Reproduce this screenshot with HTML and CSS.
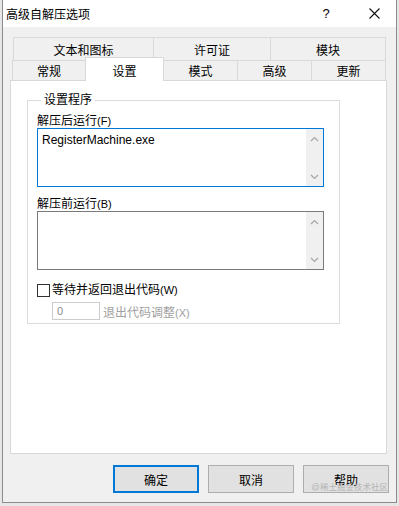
FILE: index.html
```html
<!DOCTYPE html>
<html lang="zh-CN">

<head>
    <meta charset="UTF-8">
    <meta name="viewport" content="width=device-width, initial-scale=1.0">
    <title>高级自解压选项</title>
    <link rel="stylesheet" href="styles.css">
</head>

<body>
    <div class="window">
        <div class="titlebar">
            <span class="title">高级自解压选项</span>
            <span class="help">?</span>
            <span class="close">
                <svg width="11" height="11" viewBox="0 0 11 11">
                    <path d="M0.5 0.5 L10.5 10.5 M10.5 0.5 L0.5 10.5" stroke="#111" stroke-width="1.1" fill="none" />
                </svg>
            </span>
        </div>

        <div class="client">
            <div class="tabs">
                <div class="tabrow back">
                    <div class="tab w1">文本和图标</div>
                    <div class="tab w2">许可证</div>
                    <div class="tab w3">模块</div>
                </div>
                <div class="tabrow front">
                    <div class="tab t1">常规</div>
                    <div class="tab t2 active">设置</div>
                    <div class="tab t3">模式</div>
                    <div class="tab t4">高级</div>
                    <div class="tab t5">更新</div>
                </div>
            </div>

            <div class="panel">
                <fieldset class="group">
                    <legend>设置程序</legend>

                    <div class="label">解压后运行<span class="en">(F)</span></div>
                    <div class="memo focused">
                        <div class="memo-text">RegisterMachine.exe</div>
                        <div class="scroll">
                            <svg width="9" height="6" viewBox="0 0 9 6"><path d="M1 5 L4.5 1.5 L8 5" stroke="#a6a6a6" stroke-width="1.2" fill="none" /></svg>
                            <svg width="9" height="6" viewBox="0 0 9 6"><path d="M1 1 L4.5 4.5 L8 1" stroke="#a6a6a6" stroke-width="1.2" fill="none" /></svg>
                        </div>
                    </div>

                    <div class="label second">解压前运行<span class="en">(B)</span></div>
                    <div class="memo">
                        <div class="memo-text"></div>
                        <div class="scroll">
                            <svg width="9" height="6" viewBox="0 0 9 6"><path d="M1 5 L4.5 1.5 L8 5" stroke="#a6a6a6" stroke-width="1.2" fill="none" /></svg>
                            <svg width="9" height="6" viewBox="0 0 9 6"><path d="M1 1 L4.5 4.5 L8 1" stroke="#a6a6a6" stroke-width="1.2" fill="none" /></svg>
                        </div>
                    </div>

                    <div class="check">
                        <span class="box"></span>
                        <span>等待并返回退出代码<span class="en">(W)</span></span>
                    </div>
                    <div class="exitcode">
                        <div class="numbox">0</div>
                        <span>退出代码调整<span class="en">(X)</span></span>
                    </div>
                </fieldset>
            </div>

            <div class="buttons">
                <button type="button" class="btn default">确定</button>
                <button type="button" class="btn">取消</button>
                <button type="button" class="btn">帮助</button>
            </div>
            <div class="mark">@稀土掘金技术社区</div>
        </div>
    </div>
</body>

</html>
```

FILE: styles.css
```css
* {
    margin: 0;
    padding: 0;
    box-sizing: border-box;
    font-family: "Liberation Sans", "Noto Sans CJK SC", sans-serif;
}

body {
    background: #e6e6e6;
    width: 399px;
    height: 506px;
    overflow: hidden;
}

.window {
    width: 395px;
    height: 503px;
    margin-left: 2px;
    border: 1px solid #8c8c8c;
    border-top: none;
    background: #f0f0f0;
    display: flex;
    flex-direction: column;
}

.titlebar {
    height: 27px;
    background: #fff;
    display: flex;
    align-items: center;
    font-size: 12px;
    color: #000;
    padding-left: 3px;
}

.title {
    flex: 1;
}

.help {
    width: 8px;
    text-align: center;
    font-size: 13px;
    margin-right: 39px;
}

.close {
    display: flex;
    margin-right: 16px;
}

.client {
    position: relative;
    flex: 1;
    padding: 10px 0 0 7px;
}

.tabs {
    font-size: 12px;
    color: #000;
}

.tabrow {
    display: flex;
    margin-left: 3px;
}

.tabrow.front {
    margin-left: 2px;
}

.tab {
    display: flex;
    align-items: center;
    justify-content: center;
    background: #f0f0f0;
    border: 1px solid #d9d9d9;
    border-bottom: none;
    margin-right: -1px;
}

.back .tab {
    height: 23px;
}

.front .tab {
    height: 20px;
}

.w1 { width: 141px; }
.w2 { width: 118px; }
.w3 { width: 116px; }
.t1 { width: 74px; }
.t2 { width: 79px; }
.t3 { width: 75px; }
.t4 { width: 75px; }
.t5 { width: 75px; }

.tab.active {
    background: #fff;
    height: 24px;
    margin-top: -3px;
    margin-bottom: -1px;
    position: relative;
    z-index: 1;
    padding-top: 1px;
}

.panel {
    width: 377px;
    height: 374px;
    background: #fff;
    border: 1px solid #d9d9d9;
    padding: 11px 0 0 16px;
}

.group {
    width: 313px;
    height: 232px;
    border: 1px solid #dcdcdc;
    padding: 0 0 0 9px;
    font-size: 12px;
}

.group legend {
    margin-left: 4px;
    padding: 0 3px 0 3px;
    line-height: 16px;
}

.label {
    line-height: 14px;
    margin-top: 6px;
}

.label.second {
    margin-top: 10px;
}

.en {
    font-size: 11px;
}

.memo {
    width: 287px;
    height: 59px;
    border: 1px solid #7a7a7a;
    display: flex;
    background: #fff;
}

.memo.focused {
    border-color: #0078d7;
}

.memo-text {
    flex: 1;
    padding: 4px 0 0 4px;
    font-size: 12px;
    line-height: 15px;
}

.scroll {
    width: 17px;
    background: #f0f0f0;
    display: flex;
    flex-direction: column;
    justify-content: space-between;
    align-items: center;
    padding: 7px 0 6px;
}

.check {
    display: flex;
    align-items: center;
    margin-top: 13px;
    font-size: 12px;
    line-height: 14px;
    gap: 2px;
}

.box {
    width: 13px;
    height: 13px;
    border: 1px solid #333;
    background: #fff;
}

.exitcode {
    display: flex;
    align-items: center;
    margin: 5px 0 0 15px;
    font-size: 12px;
    color: #a0a0a0;
    gap: 3px;
}

.numbox {
    width: 48px;
    height: 18px;
    border: 1px solid #cccccc;
    background: #fff;
    padding-left: 4px;
    line-height: 16px;
    font-size: 11px;
    color: #8a8a8a;
}

.buttons {
    display: flex;
    gap: 9px;
    margin: 11px 0 0 103px;
}

.btn {
    width: 86px;
    height: 28px;
    font-size: 12px;
    background: #e1e1e1;
    border: 1px solid #adadad;
    color: #000;
}

.btn.default {
    border: 2px solid #0078d7;
}

.mark {
    position: absolute;
    right: 8px;
    bottom: 10px;
    font-size: 8.5px;
    color: #b4b4b4;
}
```
